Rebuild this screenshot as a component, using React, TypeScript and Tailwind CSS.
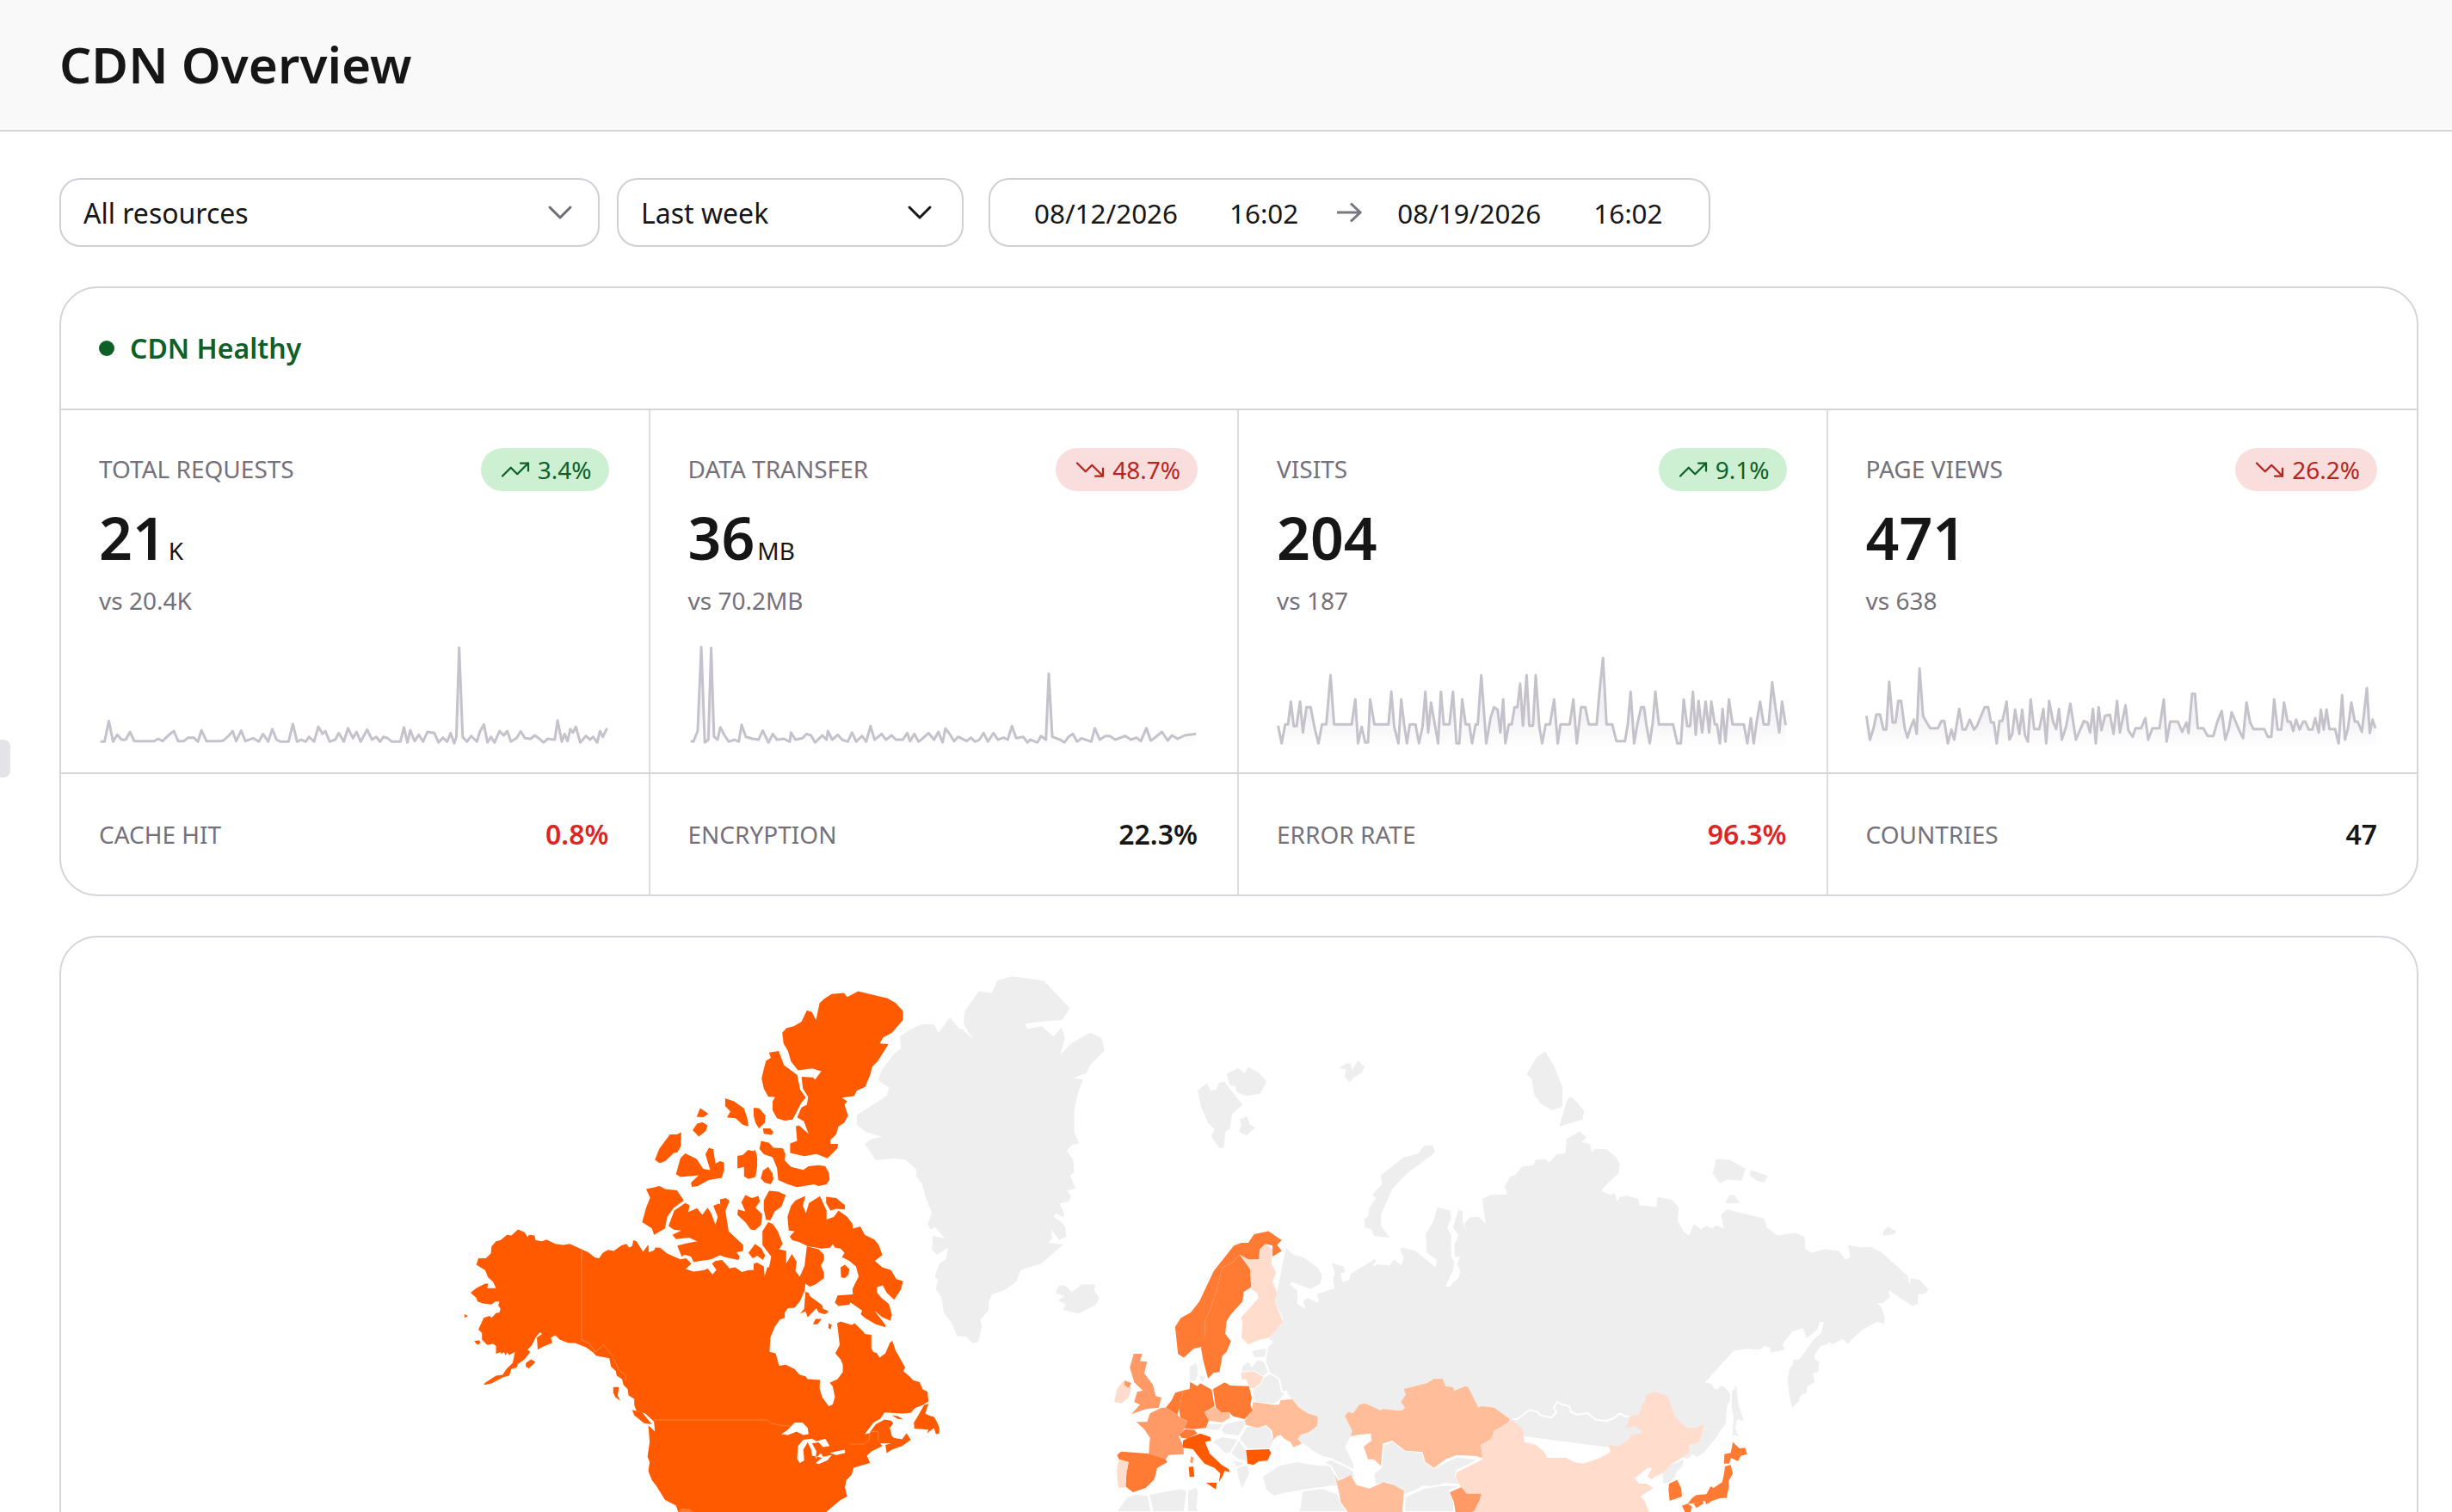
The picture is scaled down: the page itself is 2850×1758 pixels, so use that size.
import { ChevronDown, TrendingDown, TrendingUp } from "lucide-react";

type Sys = [number, number, number, number];

// page px = origin + coord * scale
const A: Sys = [500, 1100, 1 / 1.96, 1 / 2.383];
const C: Sys = [1250, 1100, 1 / 1.493, 1 / 2.383];
const D: Sys = [1280, 1500, 1 / 3, 1 / 3];
const E: Sys = [1700, 1500, 1 / 3, 1 / 3];

const conv = (s: Sys, str: string) =>
  str
    .trim()
    .split(/\s+/)
    .map((p) => {
      const [x, y] = p.split(",").map(Number);
      return `${(s[0] + x * s[2]).toFixed(1)},${(s[1] + y * s[3]).toFixed(1)}`;
    })
    .join(" ");

const GRAY = "#eeeeee";
const O1 = "#ff5a00";
const O2 = "#ff7a33";
const O3 = "#ff9a66";
const O4 = "#ffbd99";
const O5 = "#ffdccc";

type Shape = { f: string; s?: boolean; d: [Sys, string][] };

const shapes: Shape[] = [
  // Greenland, Iceland, arctic islands
  { f: GRAY, d: [[A, "1292,95 1325,84 1398,96 1440,150 1457,172 1440,205 1405,208 1355,215 1360,230 1393,222 1420,250 1438,225 1446,255 1436,300 1460,270 1503,240 1530,255 1536,290 1503,330 1495,352 1465,365 1487,370 1475,410 1467,455 1467,515 1478,547 1463,550 1450,567 1465,592 1467,628 1458,635 1470,672 1450,677 1460,692 1455,708 1433,713 1445,740 1443,752 1425,740 1420,750 1438,765 1447,780 1449,805 1433,815 1415,785 1417,810 1408,822 1443,827 1392,880 1365,890 1345,898 1335,930 1310,952 1280,965 1273,985 1272,1010 1253,1035 1257,1055 1248,1098 1235,1100 1220,1082 1200,1080 1190,1048 1170,1015 1165,975 1152,950 1157,925 1150,915 1160,880 1175,868 1180,835 1155,855 1143,842 1145,803 1172,810 1150,778 1140,785 1133,770 1143,740 1130,700 1120,658 1107,638 1107,618 1083,592 1060,588 1015,593 990,548 1005,535 1030,528 992,515 972,495 972,468 1040,415 1045,392 1020,372 1030,340 1060,295 1073,285 1070,250 1095,230 1120,217 1148,217 1158,240 1184,197 1205,228 1215,232 1237,260 1215,215 1218,180 1250,125 1280,130"]] },
  { f: GRAY, d: [[A, "1425,962 1432,942 1445,940 1462,958 1485,938 1515,938 1513,955 1525,975 1515,995 1478,1018 1442,1008 1448,992 1430,982 1445,970"]] },
  { f: GRAY, d: [[C, "212,400 228,380 235,400 245,398 248,380 258,375 290,440 272,465 268,505 260,515 258,558 250,560 235,527 242,508 230,490 218,445"]] },
  { f: GRAY, d: [[C, "262,355 282,338 293,353 300,335 318,350 332,375 321,408 298,415 280,405 278,388 268,385"]] },
  { f: GRAY, d: [[C, "285,480 298,472 303,495 312,503 297,525 284,515 288,495"]] },
  { f: GRAY, d: [[C, "457,337 470,325 478,325 480,345 490,317 502,335 497,350 482,365 476,378 467,362 470,342"]] },
  { f: GRAY, d: [[C, "783,355 800,308 815,292 830,330 845,390 845,445 827,455 808,437 796,412 792,368"]] },
  { f: GRAY, d: [[C, "858,418 864,422 883,457 880,480 840,500 852,430"]] },
  { f: GRAY, d: [[C, "605,553 620,552 624,572 575,630 550,672 530,745 530,775 545,808 518,803 514,785 502,780 502,755 508,750 510,725 522,698 515,690 532,660 530,635 570,585 595,575"]] },
  { f: GRAY, d: [[C, "1112,590 1135,592 1163,617 1156,650 1130,647 1118,657 1106,630"]] },
  { f: GRAY, d: [[C, "1172,620 1202,637 1195,655 1183,650 1170,635"]] },
  { f: GRAY, d: [[C, "1135,690 1143,690 1153,712 1127,712"]] },
  { f: GRAY, d: [[C, "1410,777 1425,790 1420,798 1402,803 1402,790"]] },
  // Russia, running on under Mongolia and China
  {
    f: GRAY,
    d: [
      [C, "365,835 378,855 395,862 420,890 428,910 425,935 408,950 375,930 372,938 385,955 385,992 400,1005 395,985 403,975 420,988 423,980 418,965 450,948 447,925 450,905 445,878 465,888 468,902 460,908 463,930 475,925 478,908 520,867 522,873 515,888 525,882 545,885 553,868 565,885 570,865 563,840 568,835 590,845 625,890 627,870 615,855 610,850 608,798 622,760 628,723 650,733 652,755 645,780 652,800 652,860 658,875 655,900 642,943 650,945 655,932 665,920 668,900 662,880 668,862 658,860 658,825 665,800 655,780 665,730 672,735 672,765 678,790 675,767 685,752 700,750 712,770 706,700 720,690 750,688 745,665 755,638 762,635 775,612 795,607 798,592 815,590 822,600 835,577 850,575 852,535 875,513 887,530 878,543 893,548 896,572 902,562 922,563 938,585 945,605 942,630 922,660 912,678 930,690 935,683 940,708 945,695 957,692 977,700 978,718 1008,723 1010,695 1035,703 1047,725 1045,760 1055,790 1065,803 1073,770 1085,785 1095,775 1105,783 1112,773 1125,782 1120,745 1130,730 1195,755 1200,780 1218,802 1250,795 1265,805 1267,840 1278,850 1300,840 1325,845 1337,870 1345,860 1340,828 1365,835 1380,833 1400,850 1445,915 1447,938 1450,920 1465,925 1480,950 1475,963 1462,965 1462,992 1452,997"],
      [E, "1485,0 1490,25 1465,45 1445,45 1460,60 1472,95 1470,118 1445,110 1395,138 1350,178 1347,190 1325,170 1290,190 1280,180 1270,190 1248,195 1228,225 1228,240 1243,250 1240,285 1222,290 1227,322 1202,335 1198,360 1180,365 1172,388 1150,410 1140,370 1133,310 1140,275 1150,262 1153,245 1175,240 1225,172 1250,150 1260,110 1245,112 1238,135 1200,168 1187,133 1150,145 1115,190 1125,208 1073,218 1073,200 1053,195 1035,208 990,205 945,212 845,322 870,328 875,342 888,348 897,335 912,337 933,362 933,385 922,405 918,465 892,500 885,515 840,568 818,582 803,572 783,590 770,582 600,560"],
      [D, "1400,500 1280,440 900,440 870,510 850,545 880,610 880,625 855,612 800,585 775,580 745,565 705,535 685,520 695,505 725,495 752,478 755,440 720,430 690,410 665,380 645,355 630,355 620,310 590,290 575,250 578,205 600,180 585,170 635,100 605,40 615,0"],
    ],
  },
  // Northern and eastern Europe, grey countries
  { f: GRAY, s: true, d: [[D, "305,265 335,250 340,290 330,320 305,318"]] },
  { f: GRAY, s: true, d: [[D, "340,295 365,300 360,320 345,320"]] },
  { f: GRAY, s: true, d: [[D, "520,210 580,200 572,235 535,238"]] },
  { f: GRAY, s: true, d: [[D, "490,265 515,245 525,265 545,240 570,250 585,285 565,303 530,283 488,288"]] },
  { f: GRAY, s: true, d: [[D, "565,303 590,290 620,310 630,355 645,355 625,385 600,400 530,390 525,350 555,325"]] },
  { f: GRAY, s: true, d: [[D, "430,465 500,450 505,470 480,510 430,505 415,490"]] },
  { f: GRAY, s: true, d: [[D, "505,475 575,470 595,490 600,530 590,555 510,555 480,520"]] },
  { f: GRAY, s: true, d: [[D, "375,465 430,465 410,490 340,490"]] },
  { f: GRAY, s: true, d: [[D, "380,530 420,510 480,520 450,570 430,570 400,540"]] },
  { f: GRAY, s: true, d: [[D, "480,520 505,558 510,600 475,590 450,570"]] },
  { f: GRAY, s: true, d: [[D, "455,590 510,605 470,620"]] },
  { f: GRAY, s: true, d: [[D, "470,620 510,605 520,640 490,700 475,650"]] },
  { f: GRAY, s: true, d: [[D, "560,650 620,610 680,597 760,610 800,610 810,625 820,640 870,660 880,685 800,685 770,690 700,700 640,710 600,720 575,700"]] },
  { f: GRAY, s: true, d: [[D, "775,600 800,590 855,615 880,630 885,660 870,655 850,655 825,665 815,640 800,615"]] },
  { f: GRAY, s: true, d: [[D, "700,700 770,690 825,710 835,740 860,774 690,774"]] },
  { f: GRAY, s: true, d: [[D, "985,540 1015,525 1060,560 1120,565 1130,600 1160,620 1240,580 1320,590 1240,630 1235,650 1260,680 1190,675 1175,690 1125,685 1060,715 1000,672 955,680 950,640 975,620"]] },
  { f: GRAY, s: true, d: [[D, "1060,720 1125,690 1190,680 1260,680 1215,700 1230,740 1230,774 1055,774"]] },
  { f: GRAY, s: true, d: [[D, "50,774 90,720 120,710 165,715 175,774"]] },
  { f: GRAY, s: true, d: [[D, "165,712 280,690 300,700 290,774 180,774"]] },
  { f: GRAY, s: true, d: [[D, "300,700 330,685 340,700 335,760 345,774 300,774"]] },
  { f: GRAY, d: [[E, "945,333 955,340 962,400 980,455 958,450 950,480 963,510 945,505 940,520 945,440 938,410 940,350 950,345"]] },
  { f: GRAY, d: [[E, "655,645 690,632 725,608 745,603 770,590 768,612 745,635 740,652 718,672 700,675 698,640"]] },
  // Coloured countries, Asia
  { f: O4, d: [[D, "1055,345 1062,365 1045,390 1060,410 1050,420 1030,420 980,415 975,420 920,395 900,400 878,430 860,425 850,440 875,490 870,510 895,505 940,500 943,525 915,545 930,590 950,590 975,612 982,535 1015,525 1060,560 1120,565 1130,600 1160,620 1200,590 1240,575 1300,580 1330,585 1323,540 1360,520 1370,490 1400,495 1425,450 1370,410 1325,405 1315,410 1280,340 1270,335 1230,352 1228,340 1200,335 1190,310 1160,310 1135,325"]] },
  { f: O4, d: [[D, "815,642 825,665 850,655 870,645 890,680 935,692 985,670 1020,680 1055,700 1050,774 860,774 835,740 830,710"]] },
  {
    f: O5,
    d: [
      [E, "175,455 210,485 215,530 255,540 285,565 295,585 360,585 390,600 420,605 480,585 515,565 510,540 540,545 575,525 590,505 625,500 625,490 600,475 570,480 585,440 615,435 625,405 640,380 635,368 670,355 715,370 740,440 780,480 815,480 842,468 825,530 788,540 790,565 770,582 730,605 695,640 670,650 660,660 645,650 660,620 645,620 620,640 600,655 615,675 640,675 665,690 620,720 635,735 650,774 50,774"],
      [D, "1290,774 1320,730 1325,710 1275,710 1255,690 1235,650 1240,635 1330,590 1325,540 1360,520 1370,490 1430,455"],
    ],
  },
  { f: O3, d: [[D, "1215,705 1255,688 1275,710 1325,710 1320,730 1300,770 1290,774 1235,774 1230,740"]] },
  { f: O2, d: [[E, "942,530 965,552 985,550 992,572 970,578 960,597 935,585 930,605 912,605 913,572 935,568"]] },
  { f: O2, d: [[E, "915,615 935,610 942,640 928,665 928,690 920,725 900,725 870,735 850,748 845,735 800,745 785,745 800,725 815,715 850,712 865,685 875,690 905,670 912,640"]] },
  { f: O2, d: [[E, "765,752 785,745 800,755 795,774 775,774"]] },
  { f: O2, d: [[E, "805,745 835,735 840,745 815,760"]] },
  { f: O2, d: [[E, "720,675 748,662 762,690 765,720 750,725 722,735 718,695"]] },
  // Coloured countries, Europe
  { f: O4, d: [[D, "530,390 600,400 620,400 625,385 665,380 690,410 720,430 755,440 752,475 725,495 695,505 685,520 700,535 670,548 660,530 640,520 625,505 612,510 590,530 600,515 595,490 575,470 545,480 505,470 500,455 525,420"]] },
  { f: O2, d: [[D, "390,345 430,322 450,333 515,335 525,375 520,400 527,420 500,450 460,440 445,425 420,428 400,410 395,380"]] },
  { f: O2, d: [[D, "310,320 335,335 345,325 385,347 395,405 360,425 375,455 365,480 320,485 290,482 298,455 275,445 272,415 285,350 308,345"]] },
  { f: O2, d: [[D, "285,350 258,358 245,385 225,410 265,435 272,415"]] },
  { f: O3, d: [[D, "225,410 265,435 275,445 302,458 290,482 270,510 285,540 288,572 235,575 225,590 165,575 170,515 150,485 122,460 160,460 170,430 210,410"]] },
  { f: O2, d: [[D, "292,485 325,488 335,500 300,518 280,515 272,505"]] },
  { f: O1, d: [[D, "345,500 380,512 382,525 362,530 378,570 420,610 445,625 447,635 430,630 425,645 410,670 415,640 395,620 360,605 335,575 320,555 285,550 285,525 305,515"]] },
  { f: O1, d: [[D, "305,617 320,615 325,650 308,652"]] },
  { f: O3, d: [[D, "313,580 322,585 318,605 310,600"]] },
  { f: O1, d: [[D, "365,672 403,672 400,695"]] },
  { f: O1, d: [[D, "505,558 585,555 592,568 580,595 550,597 530,610 510,605"]] },
  { f: O4, d: [[D, "360,425 395,408 420,428 445,425 450,445 420,462 400,458 375,455"]] },
  { f: O5, d: [[D, "488,288 530,283 565,303 555,325 530,345 515,335 505,310 490,312"]] },
  { f: O2, d: [[D, "55,575 70,563 160,570 225,590 230,600 195,620 185,660 155,690 110,705 85,685 88,640 95,600 62,590"]] },
  { f: O5, d: [[D, "62,590 95,600 88,640 85,688 60,690 55,650 55,620"]] },
  { f: O3, d: [[D, "113,222 143,222 135,248 160,250 150,290 180,330 190,370 210,375 200,410 155,415 105,433 135,400 115,390 125,355 145,350 115,322 100,270"]] },
  { f: O5, d: [[D, "78,315 105,340 95,375 70,395 45,390 55,345"]] },
  { f: O3, d: [[D, "82,315 105,325 95,342 80,330"]] },
  { f: O2, d: [[C, "275,830 288,822 300,822 310,798 335,790 358,815 350,828 358,845 342,860 342,830 330,825 320,840 318,868 300,870 285,855 270,880 255,890 245,955 235,1000 225,1040 225,1075 220,1110 205,1115 188,1140 178,1130 173,1055 183,1030 200,1015 215,985 240,900"]] },
  { f: O2, d: [[C, "255,890 270,880 285,855 303,895 305,945 292,958 290,985 270,1020 262,1040 260,1075 270,1095 262,1125 255,1135 250,1180 240,1182 230,1198 222,1150 218,1115 225,1075 225,1040 235,1000 245,955"]] },
  { f: O5, d: [[C, "300,868 318,868 320,840 330,825 342,840 340,880 348,905 342,930 350,960 346,985 352,1010 360,1040 337,1085 320,1090 300,1103 288,1085 290,1040 287,1030 318,975 315,960 305,950 303,895 285,855"]] },
  // North America
  { f: O1, d: [[A, "975,125 1042,145 1060,157 1077,180 1077,205 1052,240 1032,253 1024,270 1044,272 1020,318 1007,335 1003,355 991,390 972,400 966,415 938,420 950,430 944,440 952,470 943,490 930,500 925,522 912,537 912,548 929,548 928,560 905,588 880,576 852,582 820,573 820,547 836,540 833,500 840,497 862,520 851,485 836,475 846,447 858,440 861,418 849,395 846,362 872,364 877,370 891,347 870,339 838,344 822,320 815,290 805,270 802,240 812,227 828,222 846,210 858,178 869,182 879,205 887,158 899,145 915,133 943,130 950,141"]] },
  { f: O1, d: [[A, "772,295 794,291 806,330 836,357 843,398 856,420 846,433 826,480 808,484 790,477 780,455 780,430 786,418 770,417 760,395 755,367 760,340 765,318 776,310"]] },
  { f: O1, d: [[A, "672,422 692,430 715,450 722,475 725,500 712,495 696,477 676,475 684,458 672,443"]] },
  { f: O1, d: [[A, "737,448 750,450 764,470 762,490 749,505 741,490 737,470"]] },
  { f: O1, d: [[A, "758,505 775,505 782,516 778,523 760,520"]] },
  { f: O1, d: [[A, "615,449 634,465 622,474 607,473"]] },
  { f: O1, d: [[A, "608,492 620,488 632,497 628,512 612,528 598,510"]] },
  { f: O1, d: [[A, "546,522 562,522 572,516 571,555 563,572 555,573 536,595 523,602 512,592 522,562"]] },
  { f: O1, d: [[A, "581,574 607,590 622,617 638,621 627,577 635,559 645,563 650,603 660,596 669,599 670,620 664,642 634,648 610,665 596,667 594,655 612,635 570,640 560,632 570,588"]] },
  { f: O1, d: [[A, "700,581 712,579 724,565 737,568 740,563 745,585 745,610 741,640 725,645 715,638 715,612 700,616"]] },
  { f: O1, d: [[A, "754,540 772,545 782,559 803,560 809,575 808,594 822,612 850,620 862,610 885,607 900,610 908,628 910,647 903,660 885,665 875,660 835,668 815,660 793,648 790,615 780,585 760,577 750,562"]] },
  { f: O1, d: [[A, "770,612 780,630 782,645 776,660 762,655 753,644 758,622"]] },
  { f: O1, d: [[A, "523,665 535,673 562,677 578,705 555,725 540,750 535,782 510,800 505,782 483,765 492,725 501,697 492,673"]] },
  { f: O1, d: [[A, "581,712 591,718 588,737 608,726 620,745 632,725 640,740 650,772 655,750 645,720 658,713 672,730 680,790 713,828 713,845 698,848 705,860 702,870 672,862 660,857 640,868 600,875 594,860 580,855 573,860 563,830 590,822 608,818 590,808 560,812 552,800 572,788 555,786 543,776 556,733"]] },
  { f: O1, d: [[A, "660,702 674,698 682,706 672,735 661,716"]] },
  { f: O1, d: [[A, "718,690 733,698 748,692 751,708 741,725 756,742 754,772 740,787 730,785 718,765 700,745 701,730 718,735 709,710"]] },
  { f: O1, d: [[A, "772,678 793,680 810,690 800,722 785,735 775,760 765,758 760,730 760,705"]] },
  { f: O1, d: [[A, "832,705 855,692 849,720 856,740 863,712 888,693 903,733 903,758 920,750 930,733 950,750 962,770 963,783 980,777 990,800 1012,813 1022,828 1030,856 1013,872 1030,890 1050,898 1062,923 1077,928 1073,950 1057,980 1040,960 1031,940 1018,945 1018,960 1028,975 1045,992 1052,1022 1048,1038 1030,1028 1012,1010 1037,1050 1037,1056 1015,1048 990,1030 981,1020 984,1010 957,987 955,993 930,997 922,988 928,968 963,965 962,950 976,915 970,888 955,872 938,862 944,850 935,838 922,835 917,826 912,835 892,838 860,832 840,820 825,815 819,805 830,790 817,788 814,750 822,720"]] },
  { f: O1, d: [[A, "902,695 925,698 945,718 945,730 925,728 912,733 902,712"]] },
  { f: O1, d: [[A, "725,850 740,825 755,838 763,858 758,870 745,858 735,865"]] },
  { f: O1, d: [[A, "935,890 945,883 955,895 953,910 945,920 936,918"]] },
  { f: O1, d: [[A, "855,958 862,960 865,970 893,995 895,1005 905,1010 907,1015 898,1020 885,1015 880,1003 860,1028 855,1012 843,1018 852,1005"]] },
  { f: O1, d: [[A, "878,1033 892,1033 882,1048 872,1048"]] },
  { f: O1, d: [[A, "908,1045 915,1050 912,1062 907,1058"]] },
  { f: O1, d: [[A, "200,785 215,793 222,807 225,800 238,802 240,815 255,818 265,813 285,825 303,828 318,825 345,840 360,848 375,863 385,865 393,850 405,842 418,845 435,830 447,825 453,835 460,832 463,815 470,818 485,847 497,827 498,848 510,843 513,835 524,836 540,852 570,868 583,865 595,880 582,895 600,902 625,898 632,893 643,910 652,897 642,880 650,872 665,870 682,893 695,890 710,903 725,898 737,898 737,880 745,877 760,888 762,915 768,890 772,890 777,860 757,828 757,790 770,765 780,770 792,790 803,825 795,840 811,845 811,880 824,853 835,875 832,900 842,916 853,885 858,832 885,840 897,855 897,870 890,885 897,905 897,920 878,937 865,944 855,935 853,955 842,985 830,1002 815,1003 808,1015 808,1030 797,1035 785,1055 775,1085 773,1124 787,1128 795,1163 810,1160 830,1172 842,1188 855,1192 860,1200 888,1202 887,1225 893,1250 908,1275 917,1270 922,1250 917,1220 910,1210 928,1200 940,1180 940,1160 935,1145 923,1128 933,1105 927,1045 935,1040 960,1050 967,1045 988,1070 990,1075 1005,1077 1005,1115 1010,1125 1017,1127 1024,1140 1037,1128 1047,1100 1053,1093 1060,1120 1082,1167 1078,1178 1092,1192 1100,1203 1115,1208 1122,1228 1133,1235 1135,1262 1122,1272 1105,1280 1095,1293 1075,1295 1035,1292 1025,1310 1010,1320 990,1352 1000,1350 1015,1325 1035,1312 1050,1315 1055,1322 1047,1335 1052,1358 1058,1362 1075,1367 1085,1350 1095,1368 1075,1385 1052,1395 1040,1405 1037,1382 1050,1378 1025,1378 1030,1385 1005,1400 995,1412 1002,1432 985,1438 965,1445 960,1465 948,1480 945,1500 950,1525 935,1535 915,1555 902,1568 565,1568 560,1550 535,1535 525,1515 515,1495 505,1480 497,1455 500,1430 495,1415 500,1375 497,1328 512,1345 510,1318 490,1295 470,1288 465,1272 465,1255 452,1245 450,1228 440,1215 437,1200 425,1190 423,1178 412,1165 408,1142 378,1135 370,1125 355,1112 330,1100 315,1100 295,1090 285,1078 275,1085 278,1100 260,1108 245,1118 243,1085 255,1075 250,1070 240,1085 232,1105 222,1118 228,1125 215,1145 200,1158 197,1168 185,1172 180,1190 165,1195 140,1212 122,1216 125,1210 150,1190 165,1188 175,1170 188,1155 193,1125 180,1133 175,1125 172,1135 168,1125 163,1130 160,1125 150,1130 150,1108 143,1102 130,1105 118,1090 118,1072 110,1062 122,1030 135,1025 140,1030 150,1017 158,1015 160,1005 155,995 158,985 148,985 140,993 120,990 108,985 105,975 92,960 105,948 125,935 132,935 130,948 150,948 143,930 132,918 125,898 105,883 110,865 127,865 138,852 140,832 150,818 160,815 175,800 185,802"]] },
  { f: O1, d: [[A, "78,1020 86,1025 78,1030"]] },
  { f: O1, d: [[A, "100,1095 112,1092 115,1100 108,1105"]] },
  { f: O1, d: [[A, "218,1155 230,1145 240,1152 225,1170 218,1165"]] },
  { f: O1, d: [[A, "417,1222 430,1222 427,1245 433,1260 422,1250 417,1238"]] },
  { f: O1, d: [[A, "460,1285 483,1292 505,1325 487,1322 465,1300"]] },
  { f: O1, d: [[A, "1135,1268 1125,1272 1110,1305 1102,1320 1103,1337 1135,1340 1132,1350 1148,1335 1152,1352 1160,1350 1160,1335 1155,1320 1148,1305 1135,1300 1128,1295"]] },
  { f: O1, d: [[A, "1052,1300 1065,1302 1078,1312 1065,1310"]] },
  { f: "#ffffff", d: [[A, "1055,1350 1060,1358 1075,1358 1065,1365 1055,1362"]] },
  // Great Lakes
  { f: "#ffffff", d: [[A, "800,1352 815,1340 830,1320 848,1320 860,1335 862,1352 850,1355 835,1345 815,1355"]] },
  { f: "#ffffff", d: [[A, "838,1385 850,1368 870,1365 880,1372 900,1365 910,1385 895,1388 885,1375 870,1378 880,1400 878,1420 890,1405 895,1415 915,1410 905,1425 885,1435 878,1432 893,1418 870,1412 868,1395 860,1375 850,1395 852,1425 842,1433 836,1420"]] },
  { f: "#ffffff", d: [[A, "910,1405 925,1400 945,1395 945,1405 925,1410"]] },
  { f: O2, d: [[A, "565,1568 572,1558 590,1560 600,1568"]] },
];

const borders: { c: string; w: number; d: [Sys, string] }[] = [
  { c: "#ff8a4d", w: 0.8, d: [A, "345,840 345,1092 362,1100 376,1125 395,1105 415,1135 430,1175 445,1188 445,1205"] },
  { c: "#ff8a4d", w: 0.8, d: [A, "510,1313 768,1313 775,1322 800,1328 820,1330"] },
  { c: "#ff8a4d", w: 0.8, d: [A, "955,1380 988,1380 1000,1368 1003,1345 1020,1345 1022,1375"] },
  { c: "#ffffff", w: 2, d: [E, "175,450 190,450 235,418 262,425 272,437 310,445 327,425 318,410 330,390 345,398 372,405 378,425 400,435 435,428 465,452 500,457 525,448 550,430 565,440 580,440"] },
  { c: "#ffffff", w: 2, d: [E, "0,580 50,582 65,592"] },
];

function MapDrawing() {
  return (
    <svg viewBox="71 1090 2738 720" width="2738" height="720" className="block">
      {shapes.map((sh, i) => (
        <polygon
          key={i}
          points={sh.d.map(([s, str]) => conv(s, str)).join(" ")}
          fill={sh.f}
          stroke={sh.s ? "#ffffff" : undefined}
          strokeWidth={sh.s ? 2 : undefined}
        />
      ))}
      {borders.map((b, i) => (
        <polyline key={i} points={conv(b.d[0], b.d[1])} fill="none" stroke={b.c} strokeWidth={b.w} />
      ))}
    </svg>
  );
}

const line1 =
  "8,352 14,352 20,280 26,352 32,328 38,345 44,345 50,318 56,350 84,350 90,342 96,350 100,340 106,326 112,315 118,350 126,350 132,338 140,338 146,352 151,312 158,350 176,350 182,348 190,330 195,315 200,350 207,313 213,350 224,340 232,352 238,325 245,352 251,308 257,345 263,352 274,352 280,290 286,352 292,345 298,352 303,335 310,352 316,300 322,325 326,315 332,352 340,345 345,322 352,352 358,305 365,340 370,318 376,352 385,310 392,345 398,335 403,352 408,335 414,340 420,352 432,352 437,302 442,355 446,312 452,350 458,328 464,352 470,318 480,322 486,355 492,338 498,352 503,322 508,358 511,335 515,24 520,335 526,352 532,332 540,352 544,318 550,292 555,355 560,335 565,355 572,315 578,330 583,315 588,352 596,340 602,316 608,340 616,342 622,330 630,345 634,355 640,342 650,345 654,278 660,352 664,325 668,350 672,308 676,320 680,300 686,355 694,332 700,345 704,335 710,355 714,315 718,335 724,305";
const line2 =
  "842,350 846,352 852,315 857,22 862,355 867,345 871,25 875,335 880,345 884,302 890,330 896,352 904,345 910,352 914,293 920,335 930,342 938,345 944,313 952,355 958,325 964,345 974,342 982,352 984,320 990,345 1000,340 1006,325 1012,330 1018,355 1028,330 1034,345 1036,315 1042,345 1050,328 1056,345 1064,352 1070,320 1076,352 1084,332 1090,352 1096,298 1102,345 1112,325 1118,345 1126,330 1132,345 1142,345 1148,322 1152,350 1158,325 1164,352 1170,340 1178,322 1186,345 1192,318 1198,355 1202,306 1208,325 1214,350 1220,335 1232,350 1238,338 1244,352 1250,345 1256,322 1262,352 1270,322 1276,345 1284,338 1290,345 1296,298 1302,340 1312,335 1318,355 1322,345 1332,355 1337,332 1344,345 1348,115 1353,335 1364,345 1370,355 1376,335 1382,325 1388,352 1394,340 1408,352 1413,305 1420,345 1428,332 1434,332 1442,345 1456,332 1464,345 1472,338 1478,350 1486,305 1492,348 1498,338 1508,318 1516,348 1522,330 1530,342 1540,330 1556,325";
const line3 =
  "8,296 13,358 18,292 22,292 26,212 30,298 34,298 39,212 43,320 48,232 54,232 60,310 65,358 70,292 76,292 82,120 87,292 112,292 117,205 121,358 126,300 131,355 135,355 138,205 144,292 164,292 168,178 172,300 178,358 182,205 186,290 190,358 194,292 202,292 207,358 212,300 216,178 220,320 224,215 230,300 234,358 238,178 242,292 250,292 255,178 260,358 264,358 268,205 273,292 278,292 282,358 287,292 290,292 295,120 302,358 308,270 313,232 318,240 322,320 326,205 329,358 334,292 338,292 342,232 346,232 350,150 354,296 359,120 363,296 368,296 372,120 377,300 381,358 386,292 392,292 398,205 403,358 407,292 420,292 425,205 430,358 436,232 442,232 447,292 458,292 462,180 467,60 472,292 480,292 486,350 498,350 502,292 506,178 511,358 516,285 521,232 525,232 528,290 533,358 537,290 541,178 546,292 566,292 572,358 577,358 581,205 586,298 590,298 594,178 598,328 602,210 607,320 612,212 617,320 620,212 625,292 628,292 632,358 636,238 640,352 645,205 650,292 666,292 671,358 676,270 680,358 684,285 689,212 694,292 701,292 706,145 711,238 716,320 720,212 725,295";
const line4 =
  "838,262 843,345 848,305 852,257 857,257 862,310 866,310 870,143 875,285 879,285 883,210 887,210 892,305 896,338 900,305 905,275 909,325 913,97 918,262 923,285 928,305 939,305 944,280 948,280 953,358 958,310 962,345 969,238 974,310 978,310 984,275 990,310 994,298 1000,262 1005,232 1010,232 1014,285 1018,285 1022,358 1026,280 1030,280 1036,212 1040,345 1044,325 1048,240 1054,325 1058,240 1062,330 1066,352 1070,205 1075,308 1082,308 1088,238 1092,358 1096,210 1102,285 1106,308 1110,238 1114,345 1120,300 1126,220 1134,345 1145,280 1150,285 1154,320 1158,238 1162,358 1166,232 1170,312 1175,262 1182,258 1187,325 1192,210 1196,320 1204,225 1208,312 1214,335 1218,305 1226,305 1232,270 1236,345 1242,305 1252,305 1258,205 1262,352 1267,282 1278,282 1284,318 1290,285 1293,322 1298,185 1302,185 1306,305 1314,305 1320,332 1328,332 1334,280 1340,245 1345,345 1350,305 1354,250 1360,285 1366,320 1370,340 1375,215 1380,285 1385,308 1400,308 1405,335 1410,335 1414,205 1419,310 1424,310 1428,215 1433,282 1437,282 1441,315 1445,275 1450,310 1455,282 1458,282 1463,310 1468,310 1472,270 1477,320 1480,240 1484,310 1488,240 1492,308 1500,308 1505,358 1510,190 1514,345 1518,308 1523,215 1528,282 1532,282 1538,318 1545,165 1549,322 1553,275 1557,305";

const Sparkline = ({ line, origin, id }: { line: string; origin: number; id: string }) => {
  const pts = line
    .split(" ")
    .map((p) => p.split(",").map(Number))
    .map(([x, y]) => [x / 1.2155 + origin, y / 3] as const);
  const str = pts.map(([x, y]) => `${x.toFixed(1)},${y.toFixed(1)}`).join(" ");
  const area = `${pts[0][0].toFixed(1)},125 ${str} ${pts[pts.length - 1][0].toFixed(1)},125`;
  return (
    <svg width="600" height="125" className="block mt-[27px] overflow-visible">
      <defs>
        <linearGradient id={id} x1="0" y1="0" x2="0" y2="1">
          <stop offset="60%" stopColor="#c1bdc8" stopOpacity="0.2" />
          <stop offset="100%" stopColor="#c1bdc8" stopOpacity="0" />
        </linearGradient>
      </defs>
      <polygon points={area} fill={`url(#${id})`} />
      <polyline points={str} fill="none" stroke="#c6c2cc" strokeWidth="3" strokeLinejoin="round" />
    </svg>
  );
};

const stats = [
  { label: "TOTAL REQUESTS", up: true, pct: "3.4%", value: "21", unit: "K", vs: "vs 20.4K", line: line1, origin: -5 },
  { label: "DATA TRANSFER", up: false, pct: "48.7%", value: "36", unit: "MB", vs: "vs 70.2MB", line: line2, origin: -690 },
  { label: "VISITS", up: true, pct: "9.1%", value: "204", unit: "", vs: "vs 187", line: line3, origin: -5 },
  { label: "PAGE VIEWS", up: false, pct: "26.2%", value: "471", unit: "", vs: "vs 638", line: line4, origin: -689 },
];

const footers = [
  { label: "CACHE HIT", value: "0.8%", red: true },
  { label: "ENCRYPTION", value: "22.3%", red: false },
  { label: "ERROR RATE", value: "96.3%", red: true },
  { label: "COUNTRIES", value: "47", red: false },
];

const App = () => {
  return (
    <div className="relative h-[1758px] overflow-hidden bg-white font-['Noto_Sans',sans-serif] text-[#161616]">
      <div className="absolute left-0 top-[860px] w-[12px] h-[44px] rounded-r-[8px] bg-[#e4e3e8]" />

      <header className="h-[153px] flex items-center px-[69px] bg-[#f9f9f9] border-b-2 border-[#d5d4da]">
        <h1 className="text-[58.5px] leading-[80px] font-semibold mt-[-3px]">CDN Overview</h1>
      </header>

      <main className="pl-[69px] pr-[39px] pt-[54px]">
        <div className="flex items-center">
          <div className="w-[628px] h-[80px] flex items-center justify-between pl-[26px] pr-[20px] border-2 border-[#d0cfd5] rounded-[24px] text-[32px]">
            <span className="mt-[2px]">All resources</span>
            <ChevronDown size={48} strokeWidth={1.5} className="text-[#6f6c76]" />
          </div>
          <div className="ml-[20px] w-[403px] h-[80px] flex items-center justify-between pl-[26px] pr-[25px] border-2 border-[#d0cfd5] rounded-[24px] text-[32px]">
            <span className="mt-[2px]">Last week</span>
            <ChevronDown size={48} strokeWidth={1.5} className="text-[#161616]" />
          </div>
          <div className="ml-[29px] w-[839px] h-[80px] flex items-center pl-[51px] border-2 border-[#d0cfd5] rounded-[24px] text-[31.4px]">
            <span className="mt-[2px]">08/12/2026</span>
            <span className="ml-[60px] mt-[2px]">16:02</span>
            <svg width="30" height="24" viewBox="0 0 30 24" fill="none" stroke="#7a7682" strokeWidth="3" className="ml-[44px]">
              <path d="M1 12H28M17 1.5L28 12L17 22.5" />
            </svg>
            <span className="ml-[41px] mt-[2px]">08/19/2026</span>
            <span className="ml-[61px] mt-[2px]">16:02</span>
          </div>
        </div>

        <section className="mt-[46px] border-2 border-[#d5d4da] rounded-[44px] overflow-hidden">
          <div className="h-[142px] flex items-center gap-[18px] pl-[44px] border-b-2 border-[#d5d4da]">
            <span className="w-[18px] h-[18px] rounded-full bg-[#0e6027]" />
            <span className="text-[32px] font-semibold text-[#0e6027]">CDN Healthy</span>
          </div>

          <div className="grid grid-cols-4 border-b-2 border-[#d5d4da]">
            {stats.map((s, i) => (
              <div key={s.label} className={`h-[421px] pl-[44px] pr-[46px] pt-[44px] ${i < 3 ? "border-r-2 border-[#dddce1]" : ""}`}>
                <div className="flex items-center justify-between h-[50px]">
                  <span className="text-[28px] text-[#74717b] mt-[-2px]">{s.label}</span>
                  <span className={`h-[50px] flex items-center gap-[8px] pl-[22px] pr-[20px] rounded-full text-[28px] ${s.up ? "bg-[#cdf0d3] text-[#0e6027]" : "bg-[#fadddd] text-[#b3261e]"}`}>
                    {s.up ? <TrendingUp size={36} strokeWidth={1.5} /> : <TrendingDown size={36} strokeWidth={1.5} />}
                    {s.pct}
                  </span>
                </div>
                <div className="mt-[14px] h-[80px] flex items-baseline">
                  <span className="text-[68px] leading-[80px] font-semibold">{s.value}</span>
                  {s.unit && <span className="ml-[3px] text-[28px] text-[#161616]">{s.unit}</span>}
                </div>
                <div className="mt-[13px] text-[28px] leading-[40px] text-[#74717b]">{s.vs}</div>
                <Sparkline line={s.line} origin={s.origin} id={`spark-${i}`} />
              </div>
            ))}
          </div>

          <div className="grid grid-cols-4">
            {footers.map((f, i) => (
              <div key={f.label} className={`h-[140px] flex items-center justify-between pl-[44px] pr-[46px] ${i < 3 ? "border-r-2 border-[#dddce1]" : ""}`}>
                <span className="text-[28px] text-[#74717b]">{f.label}</span>
                <span className={`text-[32px] font-semibold ${f.red ? "text-[#dc2626]" : "text-[#161616]"}`}>{f.value}</span>
              </div>
            ))}
          </div>
        </section>

        <section className="mt-[46px] border-2 border-[#d5d4da] rounded-[44px] overflow-hidden">
          <MapDrawing />
        </section>
      </main>
    </div>
  );
};

export default App;
